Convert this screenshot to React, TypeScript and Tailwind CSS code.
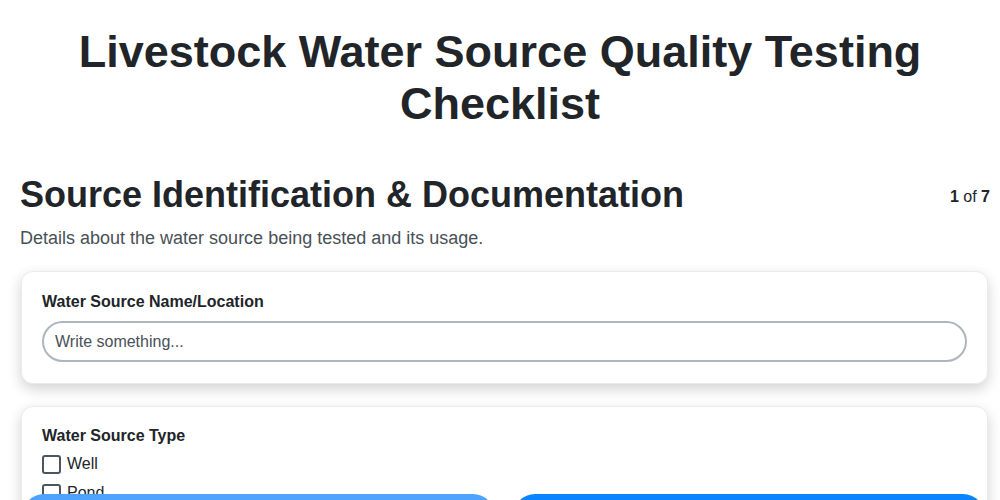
const options = ["Well", "Pond", "Stream", "Municipal", "Other"];

export default function App() {
  return (
    <div className="min-h-screen bg-white font-['Liberation_Sans',Arial,sans-serif] text-[#212529]">
      <h1 className="mx-auto max-w-[900px] px-5 pt-[26px] text-center text-[45px] font-bold leading-[52px]">
        Livestock Water Source Quality Testing Checklist
      </h1>

      <div className="pl-[21px] pr-[10px] pt-[43px]">
        <div className="flex items-start justify-between">
          <h2 className="-ml-px text-[36px] font-bold leading-[44px]">
            Source Identification &amp; Documentation
          </h2>
          <div className="pt-[12px] text-base">
            <span className="font-bold">1</span> of <span className="font-bold">7</span>
          </div>
        </div>
        <p className="-ml-px mt-[9px] text-lg leading-[25px] text-[#495057]">
          Details about the water source being tested and its usage.
        </p>

        <div className="mr-[2px] mt-[20px] flex flex-col gap-[22px]">
          <div className="rounded-xl border border-[#e9ecef] bg-white px-5 pb-[21px] pt-[18px] shadow-[0_5px_14px_rgba(0,0,0,0.18)]">
            <label className="block text-base font-bold">Water Source Name/Location</label>
            <input
              type="text"
              placeholder="Write something..."
              className="mt-[7px] h-[41px] w-full rounded-full border-2 border-[#adb5bd] px-[11px] text-base placeholder:text-[#495057] outline-none"
            />
          </div>

          <div className="rounded-xl border border-[#e9ecef] bg-white px-5 pb-5 pt-[17px] shadow-[0_5px_14px_rgba(0,0,0,0.18)]">
            <label className="block text-base font-bold">Water Source Type</label>
            <div className="mt-[4px] flex flex-col gap-[5px]">
              {options.map((o) => (
                <label key={o} className="flex items-center gap-[6px] text-base">
                  <span className="h-[19px] w-[19px] rounded-[3px] border-2 border-[#4b5563]" />
                  {o}
                </label>
              ))}
            </div>
          </div>
        </div>
      </div>

      <div className="fixed left-0 right-0 top-[494px] flex gap-[18px] pl-[22px] pr-[15px]">
        <button className="h-[48px] flex-1 rounded-[22px] bg-[#4da3ff] text-lg font-bold text-white">
          Previous
        </button>
        <button className="h-[48px] flex-1 rounded-[22px] bg-[#0a84ff] text-lg font-bold text-white">
          Next
        </button>
      </div>
    </div>
  );
}
